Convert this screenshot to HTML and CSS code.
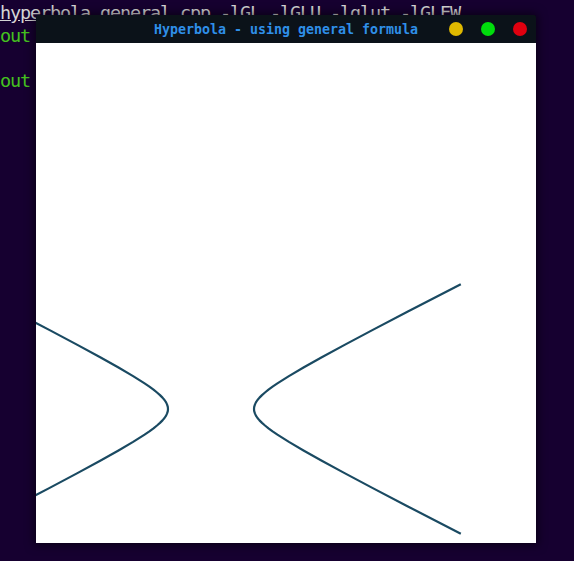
FILE: index.html
```html
<!DOCTYPE html>
<html>
<head>
<meta charset="utf-8">
<link rel="stylesheet" href="styles.css">
</head>
<body>
<div class="term">
  <div class="line"><span class="path">hyperbola_general.cpp</span> -lGL -lGLU -lglut -lGLEW</div>
  <div class="line green">out</div>
  <div class="line">&nbsp;</div>
  <div class="line green">out</div>
</div>
<div class="window">
  <div class="titlebar">
    <div class="title">Hyperbola - using general formula</div>
    <div class="buttons">
      <span class="btn yellow"></span>
      <span class="btn green-btn"></span>
      <span class="btn red"></span>
    </div>
  </div>
  <svg class="canvas" width="500" height="500" viewBox="0 0 500 500">
    <polyline class="curve" points="424.8,490.8 371.4,463.2 336.8,445.1 308.6,430.1 285.8,417.8 267.5,407.5 252.9,398.9 241.4,391.6 236.6,388.4 232.5,385.4 229.0,382.5 226.0,379.9 223.5,377.4 221.5,375.0 219.9,372.6 218.9,370.4 218.2,368.2 218,366 218.2,363.8 218.9,361.6 219.9,359.4 221.5,357.0 223.5,354.6 226.0,352.1 229.0,349.5 232.5,346.6 236.6,343.6 241.4,340.4 252.9,333.1 267.5,324.5 285.8,314.2 308.6,301.9 336.8,286.9 371.4,268.8 424.8,241.2"/>
    <polyline class="curve" points="-21.4,463.2 13.2,445.1 41.4,430.1 64.2,417.8 82.5,407.5 97.1,398.9 108.6,391.6 113.4,388.4 117.5,385.4 121.0,382.5 124.0,379.9 126.5,377.4 128.5,375.0 130.1,372.6 131.1,370.4 131.8,368.2 132,366 131.8,363.8 131.1,361.6 130.1,359.4 128.5,357.0 126.5,354.6 124.0,352.1 121.0,349.5 117.5,346.6 113.4,343.6 108.6,340.4 97.1,333.1 82.5,324.5 64.2,314.2 41.4,301.9 13.2,286.9 -21.4,268.8"/>
  </svg>
</div>
</body>
</html>
```

FILE: styles.css
```css
html, body {
  margin: 0;
  padding: 0;
  width: 574px;
  height: 561px;
  overflow: hidden;
  background: #160030;
}

.term {
  padding-top: 2px;
  font-family: "DejaVu Sans Mono", monospace;
  font-size: 18.5px;
  letter-spacing: -1.14px;
  line-height: 22.5px;
  color: #d4d4d4;
}

.line {
  white-space: pre;
  height: 22.5px;
}

.path {
  text-decoration: underline;
  text-underline-offset: 1px;
}

.green {
  color: #45c21f;
}

.window {
  position: absolute;
  left: 36px;
  top: 15px;
  width: 500px;
  box-shadow: 0 0 10px 2px rgba(0, 0, 0, 0.55);
  border-radius: 3px 3px 0 0;
  background: #0b1219;
}

.titlebar {
  height: 28px;
  display: flex;
  align-items: center;
  justify-content: center;
  position: relative;
  border-radius: 3px 3px 0 0;
  background: #0b1219;
}

.title {
  font-family: "DejaVu Sans Mono", monospace;
  font-weight: bold;
  font-size: 13.3px;
  color: #2f8fe8;
  padding-top: 1px;
}

.buttons {
  position: absolute;
  right: 9px;
  top: 7px;
  display: flex;
  gap: 18px;
}

.btn {
  width: 14px;
  height: 14px;
  border-radius: 50%;
  display: block;
}

.yellow { background: #dfb800; }
.green-btn { background: #00dc0c; }
.red { background: #e0000f; }

.canvas {
  display: block;
  background: #ffffff;
  overflow: hidden;
}

.curve {
  fill: none;
  stroke: #1a4a62;
  stroke-width: 2.2;
  stroke-linejoin: round;
}
```
